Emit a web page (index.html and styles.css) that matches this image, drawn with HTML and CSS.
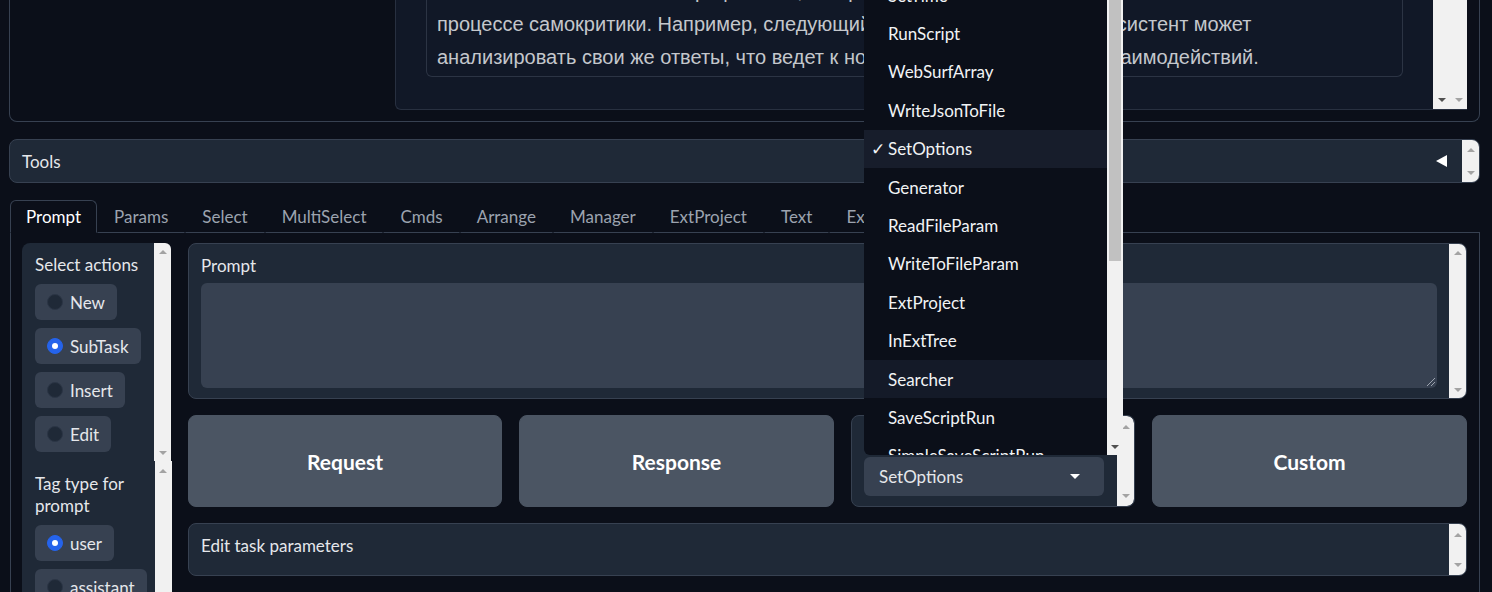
FILE: index.html
```html
<!DOCTYPE html>
<html lang="ru">
<head>
<meta charset="utf-8">
<title>UI</title>
<link rel="stylesheet" href="styles.css">
</head>
<body>
<div class="page">
  <section class="top-block">
    <div class="chat-panel">
      <div class="chat-body">
        <div class="msg">ИИ-ассистенты способны к рефлексии, которая проявляется в их участии в<br>процессе самокритики. Например, следующий шаг может быть таким: ассистент может<br>анализировать свои же ответы, что ведет к новым и сложным формам взаимодействий.</div>
      </div>
      <div class="vbar wide">
        <span class="arr down dark"></span>
        <span class="arr down"></span>
      </div>
    </div>
  </section>

  <section class="accordion">
    <span class="acc-label">Tools</span>
    <span class="acc-icon"></span>
    <div class="vbar"><span class="arr up"></span><span class="arr down"></span></div>
  </section>

  <div class="tabs">
    <div class="tab-nav">
      <span class="tab sel">Prompt</span>
      <span class="tab">Params</span>
      <span class="tab">Select</span>
      <span class="tab">MultiSelect</span>
      <span class="tab">Cmds</span>
      <span class="tab">Arrange</span>
      <span class="tab">Manager</span>
      <span class="tab">ExtProject</span>
      <span class="tab">Text</span>
      <span class="tab">ExtText</span>
      <span class="tab-fill"></span>
    </div>
    <div class="tab-panel">
      <div class="left-col">
        <div class="group g1">
          <div class="group-body">
            <div class="glabel">Select actions</div>
            <label class="pill"><span class="radio"></span>New</label>
            <label class="pill"><span class="radio on"></span>SubTask</label>
            <label class="pill"><span class="radio"></span>Insert</label>
            <label class="pill"><span class="radio"></span>Edit</label>
          </div>
          <div class="vbar"><span class="arr up"></span><span class="arr down"></span></div>
        </div>
        <div class="group g2">
          <div class="group-body">
            <div class="glabel">Tag type for prompt</div>
            <label class="pill"><span class="radio on"></span>user</label>
            <label class="pill"><span class="radio"></span>assistant</label>
          </div>
          <div class="vbar"><span class="arr up"></span></div>
        </div>
      </div>
      <div class="main-col">
        <div class="block prompt-block">
          <div class="block-body">
            <div class="blabel">Prompt</div>
            <div class="textarea"><span class="grip"></span></div>
          </div>
          <div class="vbar"><span class="arr up"></span><span class="arr down"></span></div>
        </div>
        <div class="btn-row">
          <button class="btn">Request</button>
          <button class="btn">Response</button>
          <div class="block dd-block">
            <div class="block-body dd-body">
              <div class="select"><span>SetOptions</span><span class="caret"></span></div>
            </div>
            <div class="vbar"><span class="arr up"></span><span class="arr down"></span></div>
          </div>
          <button class="btn">Custom</button>
        </div>
        <div class="block edit-block">
          <div class="block-body">
            <div class="blabel">Edit task parameters</div>
          </div>
          <div class="vbar"><span class="arr up"></span><span class="arr down"></span></div>
        </div>
      </div>
    </div>
  </div>

  <div class="dd-list">
    <ul class="dd-items">
      <li><span class="chk"></span>SetTime</li>
      <li><span class="chk"></span>RunScript</li>
      <li><span class="chk"></span>WebSurfArray</li>
      <li><span class="chk"></span>WriteJsonToFile</li>
      <li class="selected"><span class="chk">✓</span>SetOptions</li>
      <li><span class="chk"></span>Generator</li>
      <li><span class="chk"></span>ReadFileParam</li>
      <li><span class="chk"></span>WriteToFileParam</li>
      <li><span class="chk"></span>ExtProject</li>
      <li><span class="chk"></span>InExtTree</li>
      <li class="hover"><span class="chk"></span>Searcher</li>
      <li><span class="chk"></span>SaveScriptRun</li>
      <li><span class="chk"></span>SimpleSaveScriptRun</li>
    </ul>
    <div class="dd-scroll">
      <span class="thumb"></span>
      <span class="arr down dark"></span>
    </div>
  </div>
</div>
</body>
</html>
```
FILE: styles.css
```css
* { box-sizing: border-box; }
html, body { margin: 0; padding: 0; }
body {
  background: #0b0f19;
  font-family: "Lato", "Noto Sans", sans-serif;
  font-size: 17px;
  color: #e5e7eb;
  width: 1492px;
  height: 592px;
  overflow: hidden;
}
.page { position: relative; width: 1492px; height: 592px; overflow: hidden; }

/* generic scrollbar strip */
.vbar {
  width: 17px;
  flex: none;
  background: #f1f1f1;
  display: flex;
  flex-direction: column;
  justify-content: space-between;
  align-items: center;
  padding: 7px 0 6px;
}
.arr { display: block; width: 0; height: 0; border-left: 4px solid transparent; border-right: 4px solid transparent; }
.arr.up { border-bottom: 4px solid #a3a3a3; }
.arr.down { border-top: 4px solid #a3a3a3; }
.arr.down.dark { border-top-color: #505050; }

/* top block */
.top-block {
  margin: -90px 12px 0 9px;
  height: 212px;
  border: 1px solid #374151;
  border-top: none;
  border-radius: 0 0 8px 8px;
  padding: 0 12px 11px 385px;
  display: flex;
}
.chat-panel {
  flex: 1;
  display: flex;
  background: #111827;
  border: 1px solid #283040;
  border-top: none;
  border-right: none;
  border-radius: 0 0 0 6px;
}
.chat-body { flex: 1; padding: 0 30px 32px 30px; display: flex; flex-direction: column; justify-content: flex-end; }
.msg {
  border: 1px solid #2c3444;
  border-top: none;
  border-radius: 0 0 6px 6px;
  padding: 0 10px 2px;
  font-family: "Liberation Sans", Arial, sans-serif;
  font-size: 20px;
  line-height: 33px;
  color: #c4c7cc;
  white-space: nowrap;
  overflow: hidden;
}
.vbar.wide {
  width: 34px;
  flex-direction: row;
  justify-content: space-around;
  align-items: flex-end;
  padding: 0 0 7px;
}

/* accordion */
.accordion {
  margin: 17px 12px 0 9px;
  height: 44px;
  background: #1f2937;
  border: 1px solid #374151;
  border-radius: 8px;
  display: flex;
  align-items: center;
}
.acc-label { flex: 1; padding-left: 12px; color: #e5e7eb; }
.acc-icon {
  width: 0; height: 0;
  border-top: 6px solid transparent;
  border-bottom: 6px solid transparent;
  border-right: 11px solid #ffffff;
  margin-right: 15px;
}
.accordion .vbar { height: 100%; border-radius: 0 7px 7px 0; padding: 8px 0 7px; }

/* tabs */
.tabs { margin: 17px 12px 0 10px; }
.tab-nav { display: flex; height: 33px; }
.tab {
  display: flex;
  align-items: center;
  padding: 0 16px;
  border: 1px solid transparent;
  border-bottom-color: #374151;
  color: #9ca3af;
  white-space: nowrap;
}
.tab.sel {
  border-color: #374151;
  border-bottom-color: transparent;
  border-radius: 6px 6px 0 0;
  color: #ffffff;
  padding: 0 15px;
}
.tab-fill { flex: 1; border-bottom: 1px solid #374151; }
.tab-panel {
  border-left: 1px solid #374151;
  border-right: 1px solid #374151;
  padding: 10px 13px 0 11px;
  display: flex;
  gap: 17px;
  height: 400px;
}

.left-col { width: 149px; flex: none; display: flex; flex-direction: column; }
.group { display: flex; background: #1f2937; }
.g1 { border-radius: 8px 8px 0 0; height: 218px; }
.g1 .vbar { border-radius: 0 6px 0 0; }
.g2 { flex: 1; }
.g2 .vbar { justify-content: flex-start; padding-top: 8px; }
.group-body { flex: 1; padding: 11px 8px 8px 13px; display: flex; flex-direction: column; align-items: flex-start; gap: 8px; }
.g2 .group-body { padding-top: 12px; }
.glabel { line-height: 22px; color: #e5e7eb; margin-bottom: 0; }
.pill {
  display: flex;
  align-items: center;
  height: 36px;
  padding: 0 12px;
  gap: 7px;
  background: #374151;
  border-radius: 6px;
  color: #e5e7eb;
  white-space: nowrap;
}
.radio { width: 16px; height: 16px; flex: none; border-radius: 50%; background: #1f2937; border: 1px solid #2b3545; position: relative; }
.radio.on { background: #2563eb; border-color: #2563eb; }
.radio.on::after {
  content: "";
  position: absolute;
  left: 4px; top: 4px;
  width: 6px; height: 6px;
  border-radius: 50%;
  background: #ffffff;
}

.main-col { flex: 1; display: flex; flex-direction: column; gap: 16px; }
.block {
  display: flex;
  background: #1f2937;
  border: 1px solid #374151;
  border-radius: 8px;
  overflow: hidden;
}
.block-body { flex: 1; padding: 11px 12px 10px 12px; }
.blabel { line-height: 22px; color: #e5e7eb; }
.prompt-block { height: 156px; }
.textarea {
  margin-top: 6px;
  height: 105px;
  background: #374151;
  border-radius: 6px;
  position: relative;
}
.grip {
  position: absolute; right: 2px; bottom: 2px;
  width: 8px; height: 8px;
  background: linear-gradient(135deg, transparent 45%, #9ca3af 45%, #9ca3af 55%, transparent 55%, transparent 70%, #9ca3af 70%, #9ca3af 80%, transparent 80%);
}

.btn-row { display: grid; grid-template-columns: 314px 315px 284px 315px; gap: 17px; height: 92px; }
.btn {
  background: #4b5563;
  border: 1px solid #4b5563;
  border-radius: 8px;
  color: #ffffff;
  font-family: "Lato", "Noto Sans", sans-serif;
  font-size: 21px;
  font-weight: 700;
}
.dd-body { display: flex; flex-direction: column; justify-content: flex-end; padding: 0 13px 10px 12px; }
.select {
  height: 39px;
  background: #374151;
  border-radius: 6px;
  display: flex;
  align-items: center;
  justify-content: space-between;
  padding: 0 24px 0 15px;
  color: #e5e7eb;
}
.caret { width: 0; height: 0; border-left: 5px solid transparent; border-right: 5px solid transparent; border-top: 5px solid #ffffff; }
.dd-block .vbar { padding: 9px 0 8px; border-radius: 0 7px 7px 0; }

.edit-block { height: 53px; }
.edit-block .vbar { padding: 9px 0 8px; }

/* dropdown overlay */
.dd-list {
  position: absolute;
  left: 864px;
  top: -24px;
  width: 259px;
  height: 479px;
  display: flex;
  background: #0b0f19;
  border-radius: 0 0 0 6px;
  overflow: hidden;
}
.dd-items { list-style: none; margin: 0; padding: 0; width: 243px; }
.dd-items li {
  height: 38.4px;
  display: flex;
  align-items: center;
  padding-left: 7px;
  color: #f1f3f5;
  white-space: nowrap;
}
.dd-items li.selected { background: #171d2b; }
.dd-items li.hover { background: #141a28; }
.chk { width: 17px; flex: none; font-family: "DejaVu Sans", sans-serif; font-size: 17px; }
.dd-scroll {
  width: 16px;
  background: #f1f1f1;
  display: flex;
  flex-direction: column;
  align-items: center;
  justify-content: space-between;
  padding: 0 0 6px;
}
.thumb { display: block; width: 12px; height: 285px; background: #c1c1c1; }
```
